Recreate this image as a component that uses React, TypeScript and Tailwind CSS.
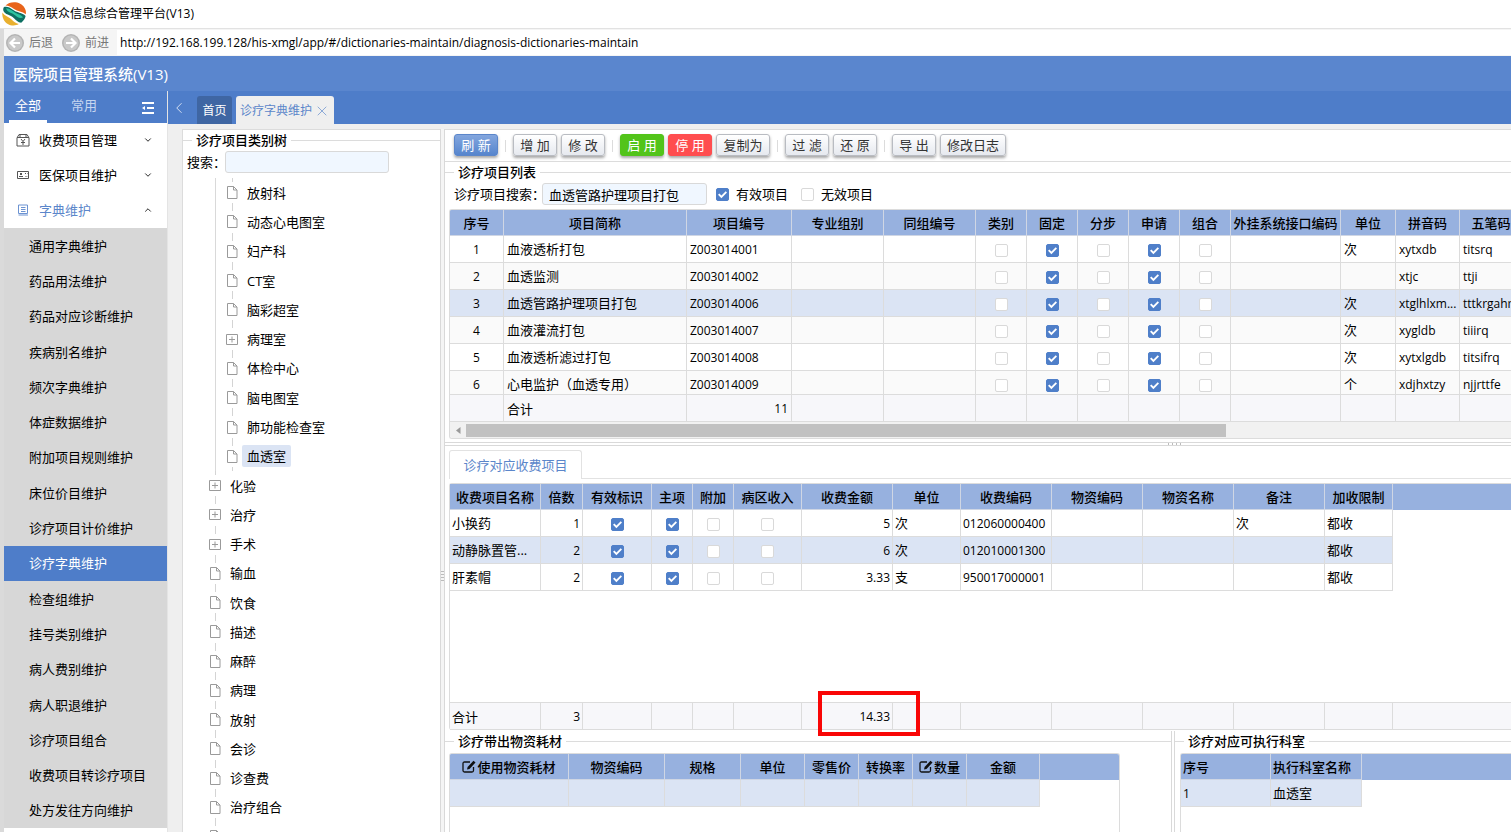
import { useState } from "react";
import type { ReactNode } from "react";
import clsx from "clsx";
import { ChevronDown, ChevronLeft, ChevronUp, X } from "lucide-react";

interface Column {
  title: string;
  width: number;
  align?: "left" | "center" | "right";
  editable?: boolean;
}

type Cell = ReactNode | boolean;

const SUB_MENU = [
  "通用字典维护",
  "药品用法维护",
  "药品对应诊断维护",
  "疾病别名维护",
  "频次字典维护",
  "体症数据维护",
  "附加项目规则维护",
  "床位价目维护",
  "诊疗项目计价维护",
  "诊疗字典维护",
  "检查组维护",
  "挂号类别维护",
  "病人费别维护",
  "病人职退维护",
  "诊疗项目组合",
  "收费项目转诊疗项目",
  "处方发往方向维护",
];

const ROOMS = [
  "放射科",
  "动态心电图室",
  "妇产科",
  "CT室",
  "脑彩超室",
  "病理室",
  "体检中心",
  "脑电图室",
  "肺功能检查室",
  "血透室",
];

const CATEGORIES = [
  "化验",
  "治疗",
  "手术",
  "输血",
  "饮食",
  "描述",
  "麻醉",
  "病理",
  "放射",
  "会诊",
  "诊查费",
  "治疗组合",
];

const FOLDERS = ["病理室", "化验", "治疗", "手术"];

const ITEM_COLUMNS: Column[] = [
  { title: "序号", width: 54, align: "center" },
  { title: "项目简称", width: 183 },
  { title: "项目编号", width: 105 },
  { title: "专业组别", width: 92 },
  { title: "同组编号", width: 92 },
  { title: "类别", width: 51, align: "center" },
  { title: "固定", width: 51, align: "center" },
  { title: "分步", width: 51, align: "center" },
  { title: "申请", width: 51, align: "center" },
  { title: "组合", width: 51, align: "center" },
  { title: "外挂系统接口编码", width: 110 },
  { title: "单位", width: 55 },
  { title: "拼音码", width: 64 },
  { title: "五笔码", width: 63 },
];

const ITEMS = [
  ["血液透析打包", "Z003014001", "次", "xytxdb", "titsrq"],
  ["血透监测", "Z003014002", "", "xtjc", "ttji"],
  ["血透管路护理项目打包", "Z003014006", "次", "xtglhlxm...", "tttkrgahr"],
  ["血液灌流打包", "Z003014007", "次", "xygldb", "tiiirq"],
  ["血液透析滤过打包", "Z003014008", "次", "xytxlgdb", "titsifrq"],
  ["心电监护（血透专用）", "Z003014009", "个", "xdjhxtzy", "njjrttfe"],
];

const ITEM_ROWS: Cell[][] = ITEMS.map(([name, code, unit, pinyin, wubi], i) => [
  i + 1,
  name,
  code,
  "",
  "",
  false,
  true,
  false,
  true,
  false,
  "",
  unit,
  pinyin,
  wubi,
]);

const FEE_COLUMNS: Column[] = [
  { title: "收费项目名称", width: 91 },
  { title: "倍数", width: 42, align: "right" },
  { title: "有效标识", width: 69, align: "center" },
  { title: "主项", width: 41, align: "center" },
  { title: "附加", width: 41, align: "center" },
  { title: "病区收入", width: 68, align: "center" },
  { title: "收费金额", width: 91, align: "right" },
  { title: "单位", width: 68 },
  { title: "收费编码", width: 91 },
  { title: "物资编码", width: 91 },
  { title: "物资名称", width: 91 },
  { title: "备注", width: 91 },
  { title: "加收限制", width: 68 },
];

const FEE_ROWS: Cell[][] = [
  ["小换药", 1, true, true, false, false, 5, "次", "012060000400", "", "", "次", "都收"],
  ["动静脉置管...", 2, true, true, false, false, 6, "次", "012010001300", "", "", "", "都收"],
  ["肝素帽", 2, true, true, false, false, 3.33, "支", "950017000001", "", "", "", "都收"],
];

const MATERIAL_COLUMNS: Column[] = [
  { title: "使用物资耗材", width: 119, editable: true },
  { title: "物资编码", width: 96 },
  { title: "规格", width: 76 },
  { title: "单位", width: 64 },
  { title: "零售价", width: 54 },
  { title: "转换率", width: 54 },
  { title: "数量", width: 54, editable: true },
  { title: "金额", width: 73 },
];

const DEPT_COLUMNS: Column[] = [
  { title: "序号", width: 90 },
  { title: "执行科室名称", width: 91 },
];

function Logo() {
  return (
    <svg className="size-6" viewBox="0 0 24 24" aria-hidden="true">
      <path d="M3.500 3.600C8-1.300 19-1 22.600 6c1.300 2.200 1.600 4.200 1.200 6.200C20.500 9.500 15.500 9.500 12 7 9 5 6.500 3.800 3.500 3.600Z" fill="#e8641b" />
      <path d="M2 5C5 4.200 8 5.400 10.500 7.600c4 3.400 10 3 13.100 6.400-.5 2.600-2.200 5.100-4.400 6.700-3.400-.4-5.200-2.500-7.200-4.500C8.500 12.600 2.600 12.800 1.400 8.800 1 7.200 1.300 6 2 5Z" fill="#0d6f62" />
      <path d="M4 6.200c4 .2 6.500 2.800 9.300 4.500 2.700 1.600 6.200 1.800 7.700 4.800-3.400 1.200-6.200-.5-8.300-2.500C10 10.600 5.500 10.800 4 6.200Z" fill="#2cc3a0" />
      <path d="M.5 10.500C2.500 14.200 6.800 14.600 9.600 17.600c2 2 4.200 3.900 7.200 4.500C11.500 25.200 4.500 23 1.700 17.700.4 15.200 0 13 .5 10.500Z" fill="#e9b02f" />
    </svg>
  );
}

function RoundArrow({ flip }: { flip?: boolean }) {
  return (
    <svg
      className={clsx("size-5", flip && "rotate-180")}
      viewBox="0 0 20 20"
      aria-hidden="true"
    >
      <circle cx="10" cy="10" r="9" fill="#b4b4b4" />
      <circle cx="10" cy="10" r="7.500" fill="#c9c9c9" />
      <path
        d="M15 10H6M10 5.500 5.500 10l4.500 4.500"
        fill="none"
        stroke="#fff"
        strokeWidth="2.200"
      />
    </svg>
  );
}

function YenBoxIcon() {
  return (
    <svg className="size-[14px]" viewBox="0 0 14 14" fill="none" stroke="#555" aria-hidden="true">
      <path d="M1 4.500h12v8.500H1zM1.500 4 3 1.500h8L12.500 4M4 2v2.500M10 2v2.500" />
      <path d="m5 6 2 2.500L9 6M7 8.500V12M5 9.500h4" />
    </svg>
  );
}

function CardIcon() {
  return (
    <svg className="size-[14px]" viewBox="0 0 14 14" fill="none" stroke="#555" aria-hidden="true">
      <path d="M1.500 3.500h11v7h-11z" />
      <path d="M4 5h2v2H4zM3 8h4v1H3zM9 5h1v1H9zM11 5h.5v1H11zM9 8h2.500v.5H9z" fill="#555" stroke="none" />
    </svg>
  );
}

function BookIcon() {
  return (
    <svg className="size-[14px]" viewBox="0 0 14 14" fill="none" stroke="#6c93d2" aria-hidden="true">
      <path d="M2.500 2h9v8.500h-9zM2.500 12h9.500M5 4.500h4.500M5 6.500h4.500M5 8.500h4.500" />
    </svg>
  );
}

function FoldIcon() {
  return (
    <svg className="h-3 w-[13px]" viewBox="0 0 13 12" fill="none" stroke="#fff" strokeWidth="1.800" aria-hidden="true">
      <path d="M0 1h12M5 6h7M0 11h12" />
      <path d="M0 6l3-2v4z" fill="#fff" stroke="none" />
    </svg>
  );
}

function FileIcon() {
  return (
    <svg className="h-[13px] w-3" viewBox="0 0 12 13" fill="none" stroke="#9a9a9a" aria-hidden="true">
      <path d="M1.500.500h6l3.500 3.500v8.500h-9.500zM7.500.500V4H11" />
    </svg>
  );
}

function PlusBoxIcon() {
  return (
    <svg className="h-[13px] w-3" viewBox="0 0 12 13" fill="none" stroke="#9a9a9a" aria-hidden="true">
      <path d="M.500 1.500h11v10H.500zM3 6.500h6M6 3.500v6" />
    </svg>
  );
}

function EditIcon() {
  return (
    <svg className="size-[14px]" viewBox="0 0 14 14" fill="none" stroke="#111" aria-hidden="true">
      <path d="M8 2H2.500Q1 2 1 3.500v7Q1 12 2.500 12h7.500q1.500 0 1.500-1.500V7" strokeWidth="1.300" />
      <path d="m5 9.500.6-2.500L11.500.800l2 1.800L7.500 9z" fill="#111" stroke="none" />
    </svg>
  );
}

function CheckBox({ label, checked }: { label?: string; checked: boolean }) {
  return (
    <span className="inline-grid place-items-center align-middle">
      <input
        type="checkbox"
        aria-label={label}
        defaultChecked={checked}
        className="peer col-start-1 row-start-1 size-[13px] appearance-none rounded-[2px] border border-[#d9d9d9] bg-white checked:border-[#4f7fc9] checked:bg-[#4f7fc9]"
      />
      <svg
        className="pointer-events-none col-start-1 row-start-1 hidden size-[9px] peer-checked:block"
        viewBox="0 0 9 9"
        fill="none"
        stroke="#fff"
        strokeWidth="1.900"
        aria-hidden="true"
      >
        <path d="m.700 4.200 2.700 2.800 5-5.200" />
      </svg>
    </span>
  );
}

function Legend({ children }: { children: string }) {
  return (
    <div className="flex h-5 shrink-0 items-center">
      <span className="h-px w-[9px] bg-[#dcdcdc]" />
      <h2 className="px-1 font-medium">{children}</h2>
      <span className="h-px flex-1 bg-[#dcdcdc]" />
    </div>
  );
}

interface GridProps {
  label: string;
  columns: Column[];
  rows: Cell[][];
  selected?: number;
  striped?: boolean;
  pad?: string;
  headLeft?: boolean;
}

function Cols({ columns }: { columns: Column[] }) {
  return (
    <colgroup>
      {columns.map((col) => (
        <col key={col.title} style={{ width: col.width }} />
      ))}
    </colgroup>
  );
}

function Grid({ label, columns, rows, selected, striped, pad = "px-[3px]", headLeft }: GridProps) {
  return (
    <div className="bg-[linear-gradient(#97b1df,#97b1df)] bg-[length:100%_26px] bg-no-repeat">
      <table aria-label={label} className="w-0 table-fixed border-separate border-spacing-0">
        <Cols columns={columns} />
        <thead>
          <tr className="h-[26px]">
            {columns.map((col) => (
              <th
                key={col.title}
                className={clsx(
                  "border-r border-b border-[#cfd6e4] bg-[#97b1df] py-0 font-medium whitespace-nowrap",
                  headLeft ? "px-[2px] text-left" : "px-0 text-center",
                )}
              >
                {col.editable ? (
                  <span className="flex items-center justify-center gap-px">
                    <EditIcon />
                    {col.title}
                  </span>
                ) : (
                  col.title
                )}
              </th>
            ))}
          </tr>
        </thead>
        <tbody>
          {rows.map((row, rowIndex) => (
            <tr
              key={rowIndex}
              className={clsx(
                "h-[27px]",
                rowIndex === selected
                  ? "bg-[#dbe4f4]"
                  : striped && rowIndex % 2 === 1
                    ? "bg-[#fafafa]"
                    : "bg-white",
              )}
            >
              {row.map((cell, i) => (
                <td
                  key={columns[i].title}
                  className={clsx(
                    "overflow-hidden border-r border-b border-[#dcdcdc] py-0 whitespace-nowrap",
                    pad,
                    columns[i].align === "center" && "text-center",
                    columns[i].align === "right" && "text-right",
                  )}
                >
                  {typeof cell === "boolean" ? (
                    <CheckBox label={columns[i].title} checked={cell} />
                  ) : (
                    <span className={clsx(/^[\x20-\x7e]+$/.test(String(cell)) && "text-xs")}>{cell}</span>
                  )}
                </td>
              ))}
            </tr>
          ))}
        </tbody>
      </table>
    </div>
  );
}

interface SummaryProps {
  label: string;
  columns: Column[];
  cells: Record<number, ReactNode>;
  pad: string;
}

function Summary({ label, columns, cells, pad }: SummaryProps) {
  return (
    <div className="border-y border-[#dcdcdc] bg-[#f7f7fa]">
      <table aria-label={label} className="w-0 table-fixed border-separate border-spacing-0">
        <Cols columns={columns} />
        <tbody>
          <tr className="h-[26px]">
            {columns.map((col, i) => (
              <td
                key={col.title}
                className={clsx(
                  "border-r border-[#dcdcdc] pt-[2px] pb-0",
                  pad,
                  typeof cells[i] === "string" ? "text-left" : "text-right text-xs",
                )}
              >
                {cells[i]}
              </td>
            ))}
          </tr>
        </tbody>
      </table>
    </div>
  );
}

function TreeRow({ name, selected }: { name: string; selected?: boolean }) {
  return (
    <li className="flex flex-1 items-center">
      <span className="flex h-full w-3 flex-col items-center justify-between">
        <span className="h-1 w-px bg-[#d4d4d4]" />
        {FOLDERS.includes(name) ? <PlusBoxIcon /> : <FileIcon />}
        <span className="h-1 w-px bg-[#d4d4d4]" />
      </span>
      <button
        type="button"
        className={clsx("ml-1 h-[22px] rounded-[2px] px-[5px]", selected && "bg-[#dbe4f4]")}
      >
        {name}
      </button>
    </li>
  );
}

interface ToolButtonProps {
  children: string;
  tone?: "plain" | "blue" | "green" | "red";
}

function ToolButton({ children, tone = "plain" }: ToolButtonProps) {
  return (
    <button
      type="button"
      className={clsx(
        "h-[22px] rounded-[3px] border whitespace-nowrap shadow-[0_2px_3px_rgba(0,0,0,0.35)]",
        children.length === 4 ? "w-[66px]" : children === "复制为" ? "w-[54px]" : "w-11",
        tone === "plain" && "border-[#b9bcc2] bg-linear-to-b from-white to-[#e6e9ef] text-[#333]",
        tone === "blue" && "border-[#5b86ca] bg-linear-to-b from-[#83a6de] to-[#5685cd] text-white",
        tone === "green" && "border-[#52c41a] bg-[#52c41a] text-white",
        tone === "red" && "border-[#ff4d4f] bg-[#ff4d4f] text-white",
      )}
    >
      {children}
    </button>
  );
}

function Separator() {
  return (
    <span className="flex h-6 items-center px-[3px]">
      <span className="h-3 w-px bg-[#dcdcdc]" />
    </span>
  );
}

function Sidebar() {
  const [active, setActive] = useState("诊疗字典维护");

  return (
    <aside className="flex w-[164px] shrink-0 flex-col border-r border-[#e4e4e4] bg-white">
      <div className="flex h-8 shrink-0 items-center bg-[#4e7dc9] text-white">
        <button type="button" className="ml-[5px] h-8 w-[38px] border-b-3 border-white pb-px">
          全部
        </button>
        <button type="button" className="ml-4 w-[42px] pb-1 text-[#c6d6f0]">
          常用
        </button>
        <button type="button" aria-label="收起菜单" className="mr-3 ml-auto pt-[2px]">
          <FoldIcon />
        </button>
      </div>
      <nav>
        <button type="button" className="flex h-[35px] w-full items-center pr-[14px] pb-px pl-3">
          <YenBoxIcon />
          <span className="ml-[9px]">收费项目管理</span>
          <ChevronDown className="ml-auto size-[10px]" strokeWidth={2} />
        </button>
        <button type="button" className="flex h-[35px] w-full items-center pr-[14px] pb-px pl-3">
          <CardIcon />
          <span className="ml-[9px]">医保项目维护</span>
          <ChevronDown className="ml-auto size-[10px]" strokeWidth={2} />
        </button>
        <button type="button" className="flex h-[35px] w-full items-center pr-[14px] pb-px pl-3">
          <BookIcon />
          <span className="ml-[9px] text-[#5b86ca]">字典维护</span>
          <ChevronUp className="ml-auto size-[10px]" strokeWidth={2} />
        </button>
        <ul className="flex h-[600px] flex-col bg-[#d7d7d7]">
          {SUB_MENU.map((name) => (
            <li key={name} className="flex flex-1">
              <button
                type="button"
                onClick={() => setActive(name)}
                className={clsx(
                  "flex-1 pl-[25px] text-left",
                  name === active && "bg-[#4e7dc9] text-white",
                )}
              >
                {name}
              </button>
            </li>
          ))}
        </ul>
      </nav>
    </aside>
  );
}

function CategoryTree() {
  return (
    <section className="flex w-[258px] shrink-0 flex-col overflow-hidden border-t border-l border-[#dcdcdc] bg-white">
      <Legend>诊疗项目类别树</Legend>
      <div className="flex items-center pt-px pl-1">
        <label htmlFor="tree-search" className="w-[38px] whitespace-nowrap">
          搜索：
        </label>
        <input
          id="tree-search"
          className="h-[22px] w-[164px] rounded-[3px] border border-[#d9d9d9] bg-[#f0f7ff] px-2"
        />
      </div>
      <ul className="mt-[5px] ml-8 flex h-[293px] shrink-0 flex-col border-l border-[#d9d9d9] pl-[10px]">
        {ROOMS.map((name) => (
          <TreeRow key={name} name={name} selected={name === "血透室"} />
        ))}
      </ul>
      <ul className="ml-[26px] flex h-[351px] shrink-0 flex-col">
        {CATEGORIES.map((name) => (
          <TreeRow key={name} name={name} />
        ))}
      </ul>
      <div className="ml-[26px] flex h-[29px] w-3 shrink-0 flex-col items-center justify-between">
        <span className="h-1 w-px bg-[#d4d4d4]" />
        <FileIcon />
        <span className="h-1 w-px bg-[#d4d4d4]" />
      </div>
    </section>
  );
}

function ItemPanel() {
  return (
    <section className="shrink-0">
      <Legend>诊疗项目列表</Legend>
      <div className="flex h-6 items-center pl-[9px]">
        <label htmlFor="item-search" className="w-[88px] whitespace-nowrap">
          诊疗项目搜索：
        </label>
        <input
          id="item-search"
          defaultValue="血透管路护理项目打包"
          className="h-[22px] w-[165px] rounded-[3px] border border-[#d9d9d9] bg-[#f0f7ff] px-[6px]"
        />
        <label className="ml-[9px] flex items-center gap-[7px]">
          <CheckBox checked />
          有效项目
        </label>
        <label className="ml-[13px] flex items-center gap-[7px]">
          <CheckBox checked={false} />
          无效项目
        </label>
      </div>
      <div className="mt-[3px] ml-1 overflow-hidden rounded-l-[3px] border-y border-l border-[#dcdcdc]">
        <div className="h-[184px] overflow-hidden">
          <Grid label="诊疗项目列表" columns={ITEM_COLUMNS} rows={ITEM_ROWS} selected={2} striped />
        </div>
        <Summary label="诊疗项目合计" columns={ITEM_COLUMNS} cells={{ 1: "合计", 2: 11 }} pad="px-[3px]" />
        <div className="flex h-4 items-center bg-[#f1f1f1]">
          <svg className="mr-[4px] ml-[5px] size-[7px]" viewBox="0 0 7 7" fill="#9a9a9a" aria-hidden="true">
            <path d="M5.500 0v7L1 3.500z" />
          </svg>
          <span className="h-[13px] w-[760px] bg-[#c1c1c1]" />
        </div>
      </div>
    </section>
  );
}

function FeePanel() {
  return (
    <section className="flex min-h-0 flex-1 flex-col">
      <div className="mt-1 ml-1 flex h-[29px] shrink-0">
        <button
          type="button"
          className="w-[133px] rounded-t-[3px] border border-b-0 border-[#e2e2e2] text-[#5b86ca]"
        >
          诊疗对应收费项目
        </button>
        <span className="flex-1 border-b border-[#e2e2e2]" />
      </div>
      <div className="mt-1 ml-1 flex flex-1 flex-col justify-between rounded-l-[3px] border-t border-l border-[#dcdcdc]">
        <Grid label="诊疗对应收费项目" columns={FEE_COLUMNS} rows={FEE_ROWS} selected={1} pad="px-[2px]" />
        <Summary
          label="收费项目合计"
          columns={FEE_COLUMNS}
          pad="px-[2px]"
          cells={{
            0: "合计",
            1: 3,
            6: (
              <span className="relative block">
                14.33
                <span className="pointer-events-none absolute -top-[18px] left-[14px] h-[45px] w-[102px] border-4 border-[#f90606]" />
              </span>
            ),
          }}
        />
      </div>
    </section>
  );
}

export default function App() {
  return (
    <div className="flex h-screen flex-col overflow-hidden bg-white font-['Open_Sans','Noto_Sans_CJK_SC',sans-serif] text-[13px] leading-[18px] text-black">
      <header className="flex h-[29px] shrink-0 items-center border-b border-[#e2e2e2] pl-[2px]">
        <Logo />
        <h1 className="ml-2 text-xs">易联众信息综合管理平台(V13)</h1>
      </header>
      <div className="flex min-h-0 flex-1 flex-col border-l-4 border-[#dadada]">
        <div className="flex h-[27px] shrink-0 items-center bg-[#f5f5f5] text-xs text-[#777]">
          <button type="button" className="ml-px flex items-center gap-1">
            <RoundArrow />
            后退
          </button>
          <button type="button" className="ml-2 flex items-center gap-1">
            <RoundArrow flip />
            前进
          </button>
          <input
            aria-label="地址"
            readOnly
            value="http://192.168.199.128/his-xmgl/app/#/dictionaries-maintain/diagnosis-dictionaries-maintain"
            className="ml-2 h-[25px] min-w-0 flex-1 bg-white pl-[3px] text-black"
          />
        </div>
        <div className="flex h-[35px] shrink-0 items-center bg-[#5a86ce] pl-[9px] text-[15px] font-medium text-white">
          医院项目管理系统(V13)
        </div>
        <div className="flex min-h-0 flex-1">
          <Sidebar />
          <main className="flex min-w-0 flex-1 flex-col bg-[#efefef]">
            <div className="flex h-[33px] shrink-0 items-end bg-[#4e7dc9]">
              <button type="button" aria-label="向左" className="mr-[9px] ml-[2px] self-center text-white">
                <ChevronLeft className="size-[18px]" strokeWidth={1} />
              </button>
              <button type="button" className="h-7 w-[35px] rounded-t-[3px] bg-[#3f66a3] pt-px text-xs text-white">
                首页
              </button>
              <button
                type="button"
                className="ml-1 flex h-7 w-[98px] items-center justify-center gap-[2px] rounded-t-[3px] bg-[#efefef] pt-px text-xs text-[#5b86ca]"
              >
                诊疗字典维护
                <X className="size-4" strokeWidth={1} />
              </button>
            </div>
            <div className="mt-[5px] ml-[14px] flex min-h-0 flex-1">
              <CategoryTree />
              <div className="flex w-[5px] shrink-0 flex-col items-center justify-center gap-[2px] border-x border-[#d9d9d9] bg-[#f5f5f5] pt-[190px]">
                <span className="h-px w-[3px] bg-[#bbb]" />
                <span className="h-px w-[3px] bg-[#bbb]" />
                <span className="h-px w-[3px] bg-[#bbb]" />
                <span className="h-px w-[3px] bg-[#bbb]" />
              </div>
              <div className="flex min-w-0 flex-1 flex-col bg-white">
                <div className="flex h-[33px] shrink-0 items-start gap-1 border-y border-[#dcdcdc] pt-1 pl-[9px]">
                  <ToolButton tone="blue">刷 新</ToolButton>
                  <Separator />
                  <ToolButton>增 加</ToolButton>
                  <ToolButton>修 改</ToolButton>
                  <Separator />
                  <ToolButton tone="green">启 用</ToolButton>
                  <ToolButton tone="red">停 用</ToolButton>
                  <ToolButton>复制为</ToolButton>
                  <Separator />
                  <ToolButton>过 滤</ToolButton>
                  <ToolButton>还 原</ToolButton>
                  <Separator />
                  <ToolButton>导 出</ToolButton>
                  <ToolButton>修改日志</ToolButton>
                </div>
                <ItemPanel />
                <div className="mt-[3px] flex h-1 shrink-0 justify-center gap-[3px] border-y border-[#d9d9d9] pl-[393px]">
                  <span className="h-[2px] w-px bg-[#bbb]" />
                  <span className="h-[2px] w-px bg-[#bbb]" />
                  <span className="h-[2px] w-px bg-[#bbb]" />
                  <span className="h-[2px] w-px bg-[#bbb]" />
                </div>
                <FeePanel />
                <div className="flex h-[102px] shrink-0">
                  <section className="flex min-w-0 flex-1 flex-col pt-px">
                    <Legend>诊疗带出物资耗材</Legend>
                    <div className="mt-[2px] ml-1 max-w-[671px] flex-1 overflow-hidden rounded-t-[3px] border border-b-0 border-[#dcdcdc]">
                      <Grid
                        label="诊疗带出物资耗材"
                        columns={MATERIAL_COLUMNS}
                        rows={[MATERIAL_COLUMNS.map(() => "")]}
                        selected={0}
                      />
                    </div>
                  </section>
                  <div className="mt-px w-1 shrink-0 border-x border-[#d9d9d9]" />
                  <section className="flex w-[336px] shrink-0 flex-col pt-px">
                    <Legend>诊疗对应可执行科室</Legend>
                    <div className="mt-[2px] ml-[5px] flex-1 overflow-hidden rounded-tl-[3px] border-t border-l border-[#dcdcdc]">
                      <Grid
                        label="诊疗对应可执行科室"
                        columns={DEPT_COLUMNS}
                        rows={[[1, "血透室"]]}
                        selected={0}
                        pad="px-[2px]"
                        headLeft
                      />
                    </div>
                  </section>
                </div>
              </div>
            </div>
          </main>
        </div>
      </div>
    </div>
  );
}
